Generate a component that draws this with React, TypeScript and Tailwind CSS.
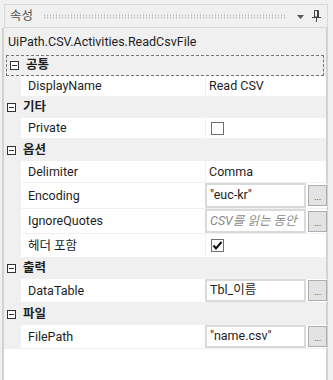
import React from "react";

type Row =
  | { kind: "cat"; label: string; h: number }
  | { kind: "text"; name: string; value: string; h: number }
  | { kind: "check"; name: string; checked: boolean; h: number }
  | { kind: "edit"; name: string; value: string; placeholder?: boolean; h: number };

const rows: Row[] = [
  { kind: "cat", label: "공통", h: 21 },
  { kind: "text", name: "DisplayName", value: "Read CSV", h: 20 },
  { kind: "cat", label: "기타", h: 21 },
  { kind: "check", name: "Private", checked: false, h: 20 },
  { kind: "cat", label: "옵션", h: 22 },
  { kind: "text", name: "Delimiter", value: "Comma", h: 21 },
  { kind: "edit", name: "Encoding", value: "\"euc-kr\"", h: 25 },
  { kind: "edit", name: "IgnoreQuotes", value: "CSV를 읽는 동안", placeholder: true, h: 24 },
  { kind: "check", name: "헤더 포함", checked: true, h: 23 },
  { kind: "cat", label: "출력", h: 21 },
  { kind: "edit", name: "DataTable", value: "Tbl_이름", h: 23 },
  { kind: "cat", label: "파일", h: 22 },
  { kind: "edit", name: "FilePath", value: "\"name.csv\"", h: 23 },
];

function MinusBox() {
  return (
    <svg width="9" height="9" viewBox="0 0 9 9" className="shrink-0">
      <rect x="0.5" y="0.5" width="8" height="8" fill="white" stroke="#333" />
      <line x1="2" y1="4.5" x2="7" y2="4.5" stroke="#333" />
    </svg>
  );
}

function Pin() {
  return (
    <svg width="9" height="12" viewBox="0 0 9 12">
      <path d="M2.5 0.5 H6.5 V7 H2.5 Z" fill="none" stroke="#444" />
      <line x1="5.5" y1="1" x2="5.5" y2="7" stroke="#444" />
      <line x1="0" y1="7.5" x2="9" y2="7.5" stroke="#444" />
      <line x1="4.5" y1="8" x2="4.5" y2="12" stroke="#444" />
    </svg>
  );
}

function Checkbox({ checked }: { checked: boolean }) {
  return (
    <div className="w-[13px] h-[13px] border border-[#707070] bg-white flex items-center justify-center">
      {checked && (
        <svg width="11" height="11" viewBox="0 0 11 11">
          <path d="M1.5 5.5 L4 8.5 L9.5 2" fill="none" stroke="#111" strokeWidth="2" />
        </svg>
      )}
    </div>
  );
}

export default function App() {
  return (
    <div
      className="w-[333px] h-[380px] bg-[#f0f0f0] overflow-hidden text-[12.5px] text-[#1e1e1e]"
      style={{ fontFamily: 'Roboto, "Noto Sans CJK KR", sans-serif' }}
    >
      {/* 제목 */}
      <div className="ml-[4px] mt-[4px] w-[324px] h-[24px] border border-[#d9d9d9] flex items-center pl-[5px] pr-[6px]">
        <span className="text-[#555] leading-none">속성</span>
        <div className="flex-1 mx-[10px] h-[5px] bg-[radial-gradient(circle,#b0b0b0_0.7px,transparent_0.9px)] bg-[length:3px_2.5px]" />
        <svg width="8" height="5" viewBox="0 0 8 5" className="mr-[7px] mt-[2px]">
          <path d="M0 0 H7 L3.5 4 Z" fill="#555" />
        </svg>
        <Pin />
      </div>

      {/* 본문 */}
      <div className="ml-[2px] w-[326px] h-[352px] border-l-2 border-r-2 border-[#d2d2d2] flex flex-col">
        <div className="h-[27px] flex items-center pl-[4px] pt-[1px]">UiPath.CSV.Activities.ReadCsvFile</div>

        <div className="flex flex-col">
          {rows.map((r, i) => {
            if (r.kind === "cat") {
              return (
                <div
                  key={i}
                  style={{ height: r.h }}
                  className={`flex items-center pl-[3px] gap-[7px] ${i === 0 ? "mx-[2px] border border-dashed border-[#777]" : ""}`}
                >
                  <MinusBox />
                  <span className="font-bold leading-none">{r.label}</span>
                </div>
              );
            }
            return (
              <div key={i} style={{ height: r.h }} className="flex mb-px">
                <div className="w-[17px] shrink-0" />
                <div className="w-[184px] bg-white flex items-center pl-[7px] pt-[1px] shrink-0">{r.name}</div>
                <div className="w-px" />
                <div className="flex-1 bg-white flex items-center">
                  {r.kind === "text" && <span className="pl-[3px] pt-[1px]">{r.value}</span>}
                  {r.kind === "check" && (
                    <div className="pl-[5px]">
                      <Checkbox checked={r.checked} />
                    </div>
                  )}
                  {r.kind === "edit" && (
                    <div className="flex h-full w-full items-center">
                      <div className="w-[101px] h-full border-2 border-[#dadada] flex items-center pl-[3px] overflow-hidden whitespace-nowrap">
                        <span className={r.placeholder ? "italic text-[#8a8a8a]" : ""}>{r.value}</span>
                      </div>
                      <div className="ml-[2px] w-[19px] h-[21px] border border-[#adadad] bg-[#e3e3e3] flex items-end justify-center pb-[3px] text-[9px] leading-none">
                        ...
                      </div>
                    </div>
                  )}
                </div>
              </div>
            );
          })}
        </div>
        <div className="flex-1 bg-white" />
      </div>
    </div>
  );
}
